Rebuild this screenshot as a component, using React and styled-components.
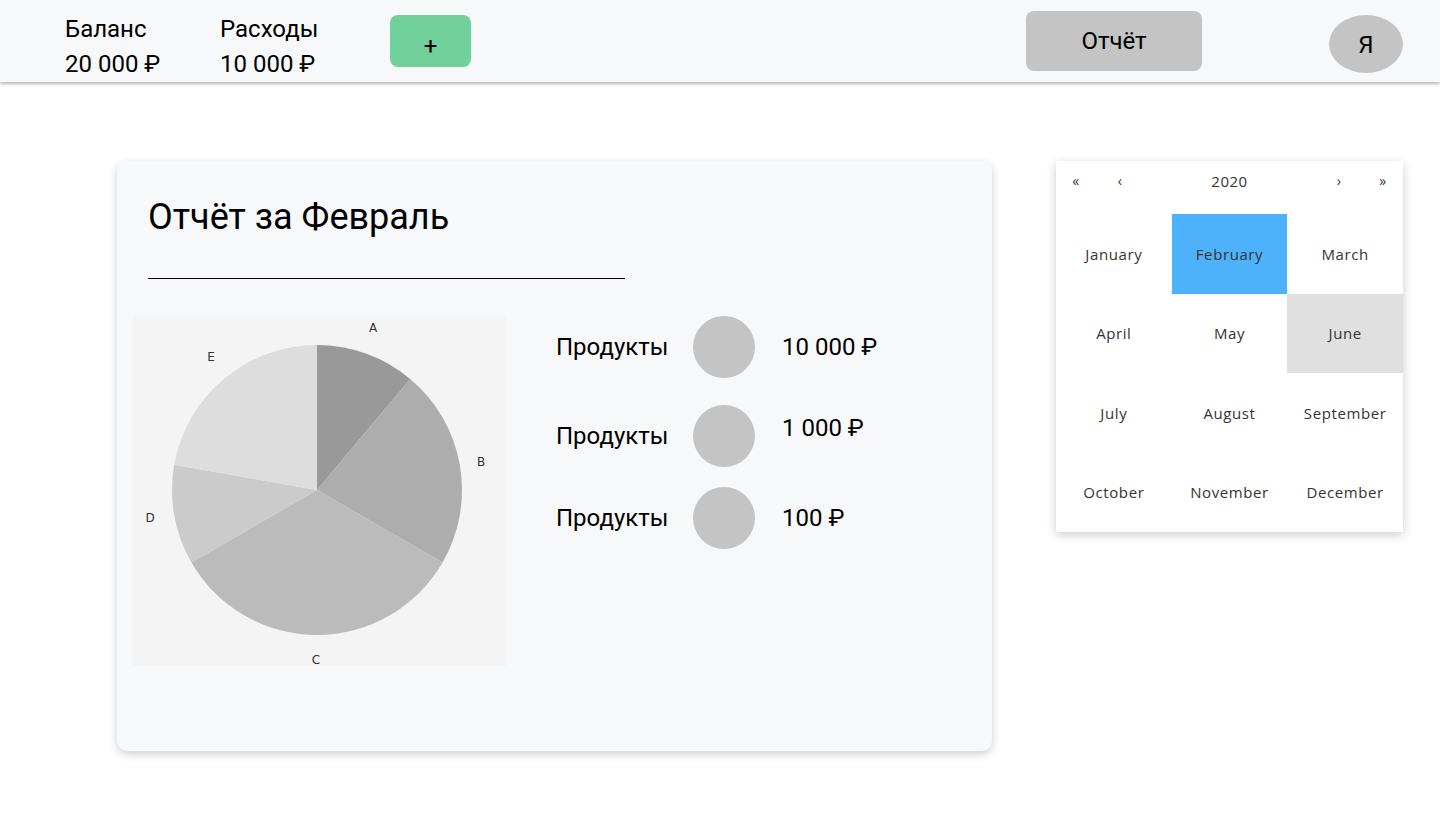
import React from 'react';
import styled, { createGlobalStyle } from 'styled-components';

const GlobalStyle = createGlobalStyle`
  body {
    margin: 0;
    background: #ffffff;
    font-family: Roboto, 'Noto Sans', sans-serif;
    color: #000;
  }
`;

const Page = styled.div`
  width: 1440px;
  min-height: 815px;
`;

const Topbar = styled.header`
  display: flex;
  align-items: center;
  height: 82px;
  padding: 0 37px 0 65px;
  background: #f7f8fa;
  box-shadow: 0 2px 3px rgba(0, 0, 0, 0.28);
  box-sizing: border-box;
`;

const Stat = styled.div`
  width: ${(p) => p.width}px;
  display: flex;
  flex-direction: column;
  margin-top: 11px;
  font-size: 24px;
  line-height: 35px;
`;

const AddButton = styled.button`
  width: 81px;
  height: 52px;
  border: none;
  border-radius: 8px;
  background: #72d09a;
  font-family: Roboto, sans-serif;
  font-size: 24px;
  padding-top: 10px;
  color: #000;
`;

const Spacer = styled.div`
  flex: 1;
`;

const ReportButton = styled.button`
  width: 176px;
  height: 60px;
  border: none;
  border-radius: 8px;
  background: #c4c4c4;
  font-family: Roboto, sans-serif;
  font-size: 24px;
  color: #000;
`;

const Avatar = styled.div`
  width: 74px;
  height: 58px;
  margin-left: 127px;
  margin-top: 6px;
  border-radius: 50%;
  background: #c4c4c4;
  display: flex;
  align-items: center;
  justify-content: center;
  font-size: 24px;
  padding-top: 2px;
  box-sizing: border-box;
`;

const Main = styled.main`
  display: flex;
  align-items: flex-start;
  gap: 64px;
  padding: 79px 0 0 117px;
`;

const Card = styled.section`
  width: 875px;
  height: 590px;
  background: #f7f8fa;
  border-radius: 10px;
  box-shadow: 0 3px 10px rgba(0, 0, 0, 0.2);
  box-sizing: border-box;
  padding-top: 36px;
`;

const Title = styled.h1`
  margin: 0 31px;
  font-size: 36px;
  font-weight: 400;
  line-height: 40px;
`;

const Rule = styled.hr`
  width: 477px;
  margin: 41px 0 37px 31px;
  border: none;
  border-top: 1px solid #000;
`;

const Body = styled.div`
  display: flex;
  align-items: flex-start;
  gap: 50px;
  padding-left: 16px;
`;

const ChartBox = styled.div`
  width: 373px;
  height: 350px;
  background: #f4f4f4;
`;

const Legend = styled.div`
  display: flex;
  flex-direction: column;
`;

const LegendRow = styled.div`
  display: grid;
  grid-template-columns: 110px 62px auto;
  column-gap: 27px;
  align-items: center;
  margin-top: ${(p) => p.top || 0}px;
  font-size: 24px;
`;

const Swatch = styled.div`
  width: 62px;
  height: 62px;
  border-radius: 50%;
  background: #c4c4c4;
`;

const Amount = styled.span`
  align-self: ${(p) => (p.raised ? 'start' : 'center')};
  margin-top: ${(p) => (p.raised ? '9px' : '0')};
`;

const Calendar = styled.aside`
  width: 347px;
  background: #fff;
  box-shadow: 0 3px 10px rgba(0, 0, 0, 0.2);
  font-family: 'Open Sans', Lato, sans-serif;
  color: #333;
`;

const CalNav = styled.div`
  display: grid;
  grid-template-columns: 40px 48px 1fr 48px 40px;
  height: 53px;
  box-sizing: border-box;
  padding-top: 10px;
  align-items: start;
  text-align: center;
  font-size: 15px;
  letter-spacing: 0.5px;
`;

const NavArrow = styled.span`
  font-size: 14px;
  color: #333;
`;

const MonthGrid = styled.div`
  display: grid;
  grid-template-columns: repeat(3, 1fr);
  grid-auto-rows: 79.5px;
`;

const Month = styled.div`
  display: flex;
  align-items: center;
  justify-content: center;
  font-size: 15px;
  letter-spacing: 0.6px;
  background: ${(p) => (p.active ? '#4eb2fb' : p.hover ? '#e0e0e0' : 'transparent')};
`;

const slices = [
  { from: 0, to: 40, color: '#999999' },
  { from: 40, to: 120, color: '#adadad' },
  { from: 120, to: 240, color: '#bbbbbb' },
  { from: 240, to: 280, color: '#cbcbcb' },
  { from: 280, to: 360, color: '#dddddd' },
];

const labels = [
  { t: 'A', x: 240, y: 12 },
  { t: 'B', x: 348, y: 146 },
  { t: 'C', x: 183, y: 344 },
  { t: 'D', x: 17, y: 202 },
  { t: 'E', x: 78, y: 41 },
];

function point(cx, cy, r, deg) {
  const a = ((deg - 90) * Math.PI) / 180;
  return [cx + r * Math.cos(a), cy + r * Math.sin(a)];
}

function PieChart() {
  const cx = 184;
  const cy = 174;
  const r = 145;
  return (
    <svg width="373" height="350" viewBox="0 0 373 350">
      {slices.map((s) => {
        const [x1, y1] = point(cx, cy, r, s.from);
        const [x2, y2] = point(cx, cy, r, s.to);
        const large = s.to - s.from > 180 ? 1 : 0;
        return (
          <path
            key={s.from}
            d={`M${cx} ${cy} L${x1} ${y1} A${r} ${r} 0 ${large} 1 ${x2} ${y2} Z`}
            fill={s.color}
          />
        );
      })}
      {labels.map((l) => (
        <text
          key={l.t}
          x={l.x}
          y={l.y}
          textAnchor="middle"
          dominantBaseline="central"
          fontFamily="'DejaVu Sans', sans-serif"
          fontSize="12"
          fill="#333"
        >
          {l.t}
        </text>
      ))}
    </svg>
  );
}

const months = [
  'January', 'February', 'March',
  'April', 'May', 'June',
  'July', 'August', 'September',
  'October', 'November', 'December',
];

export default function App() {
  return (
    <Page>
      <GlobalStyle />
      <Topbar>
        <Stat width={155}>
          <span>Баланс</span>
          <span>20 000 ₽</span>
        </Stat>
        <Stat width={170}>
          <span>Расходы</span>
          <span>10 000 ₽</span>
        </Stat>
        <AddButton>+</AddButton>
        <Spacer />
        <ReportButton>Отчёт</ReportButton>
        <Avatar>Я</Avatar>
      </Topbar>

      <Main>
        <Card>
          <Title>Отчёт за Февраль</Title>
          <Rule />
          <Body>
            <ChartBox>
              <PieChart />
            </ChartBox>
            <Legend>
              <LegendRow>
                <span>Продукты</span>
                <Swatch />
                <Amount>10 000 ₽</Amount>
              </LegendRow>
              <LegendRow top={27}>
                <span>Продукты</span>
                <Swatch />
                <Amount raised>1 000 ₽</Amount>
              </LegendRow>
              <LegendRow top={20}>
                <span>Продукты</span>
                <Swatch />
                <Amount>100 ₽</Amount>
              </LegendRow>
            </Legend>
          </Body>
        </Card>

        <Calendar>
          <CalNav>
            <NavArrow>«</NavArrow>
            <NavArrow>‹</NavArrow>
            <span>2020</span>
            <NavArrow>›</NavArrow>
            <NavArrow>»</NavArrow>
          </CalNav>
          <MonthGrid>
            {months.map((m) => (
              <Month key={m} active={m === 'February'} hover={m === 'June'}>
                {m}
              </Month>
            ))}
          </MonthGrid>
        </Calendar>
      </Main>
    </Page>
  );
}
